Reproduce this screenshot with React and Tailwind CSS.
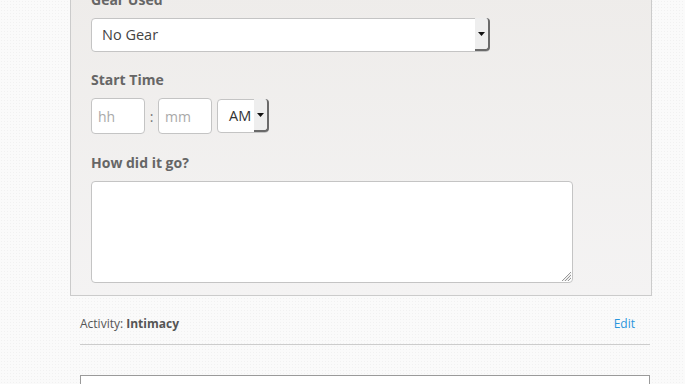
import React from "react";

function Arrow() {
  return (
    <svg width="7" height="4" viewBox="0 0 7 4" className="block">
      <path d="M0 0 H7 L3.5 4 Z" fill="#111" />
    </svg>
  );
}

export default function App() {
  return (
    <div className="h-[384px] overflow-hidden bg-[#fafafa] bg-[radial-gradient(#f1f1f1_0.6px,transparent_0.7px)] bg-[length:3px_3px] font-['Open_Sans',sans-serif]">
      <div className="ml-[70px] -mt-[10px] w-[582px] border-x border-b border-[#cbcbcb] bg-linear-to-b from-[#eeecea] to-[#f4f3f3] pl-[20px] pb-[12px]">
        <div className="text-[14px] leading-[20px] font-bold text-[#666]">Gear Used</div>
        <div className="mt-2 flex h-[34px] w-[399px] items-center rounded-[4px] border border-[#c4c4c4] bg-white">
          <span className="flex-1 pl-[10px] text-[14.5px] text-[#444]">No Gear</span>
          <div className="flex h-[33px] w-[15px] items-center justify-center rounded-r-[4px] border-r-2 border-b-2 border-[#6a6a6a] bg-[#eeeeee] -mr-px -mt-px">
            <Arrow />
          </div>
        </div>

        <div className="mt-[18px] text-[14px] leading-[20px] font-bold text-[#666]">Start Time</div>
        <div className="mt-2 flex items-center">
          <div className="flex h-[36px] w-[54px] items-center rounded-[4px] border border-[#c4c4c4] bg-white pl-[6px] text-[14px] text-[#a9a9a9]">hh</div>
          <div className="w-[13px] text-center text-[14px] text-[#777]">:</div>
          <div className="flex h-[36px] w-[54px] items-center rounded-[4px] border border-[#c4c4c4] bg-white pl-[6px] text-[14px] text-[#a9a9a9]">mm</div>
          <div className="ml-[5px] flex h-[34px] w-[52px] items-center rounded-[4px] border border-[#c4c4c4] bg-white">
            <span className="flex-1 pl-[11px] text-[14.5px] text-[#333]">AM</span>
            <div className="flex h-[33px] w-[15px] items-center justify-center rounded-r-[4px] border-r-2 border-b-2 border-[#6a6a6a] bg-[#eeeeee] -mr-px -mt-px">
              <Arrow />
            </div>
          </div>
        </div>

        <div className="mt-[19px] text-[14px] leading-[20px] font-bold text-[#666]">How did it go?</div>
        <div className="relative mt-2 h-[102px] w-[482px]">
          <textarea className="block h-full w-full resize-none rounded-[4px] border border-[#c4c4c4] bg-white outline-none" />
          <svg width="12" height="12" viewBox="0 0 12 12" className="absolute bottom-[1px] right-[1px]">
            <path d="M11 2 L2 11 M11 5 L5 11 M11 8 L8 11" stroke="#999" strokeWidth="1" />
            <path d="M11 3.5 L3.5 11 M11 6.5 L6.5 11" stroke="#ddd" strokeWidth="1" />
          </svg>
        </div>
      </div>

      <div className="ml-[80px] flex w-[570px] items-center justify-between border-b border-[#cccccc] pt-[19px] pb-[11px] pr-[15px] text-[12px] leading-[18px]">
        <div className="text-[#555]">
          Activity: <span className="font-bold text-[#555]">Intimacy</span>
        </div>
        <span className="text-[#2a96dd]">Edit</span>
      </div>

      <div className="ml-[80px] mt-[30px] h-[60px] w-[570px] border border-[#9a9a9a] bg-white" />
    </div>
  );
}
